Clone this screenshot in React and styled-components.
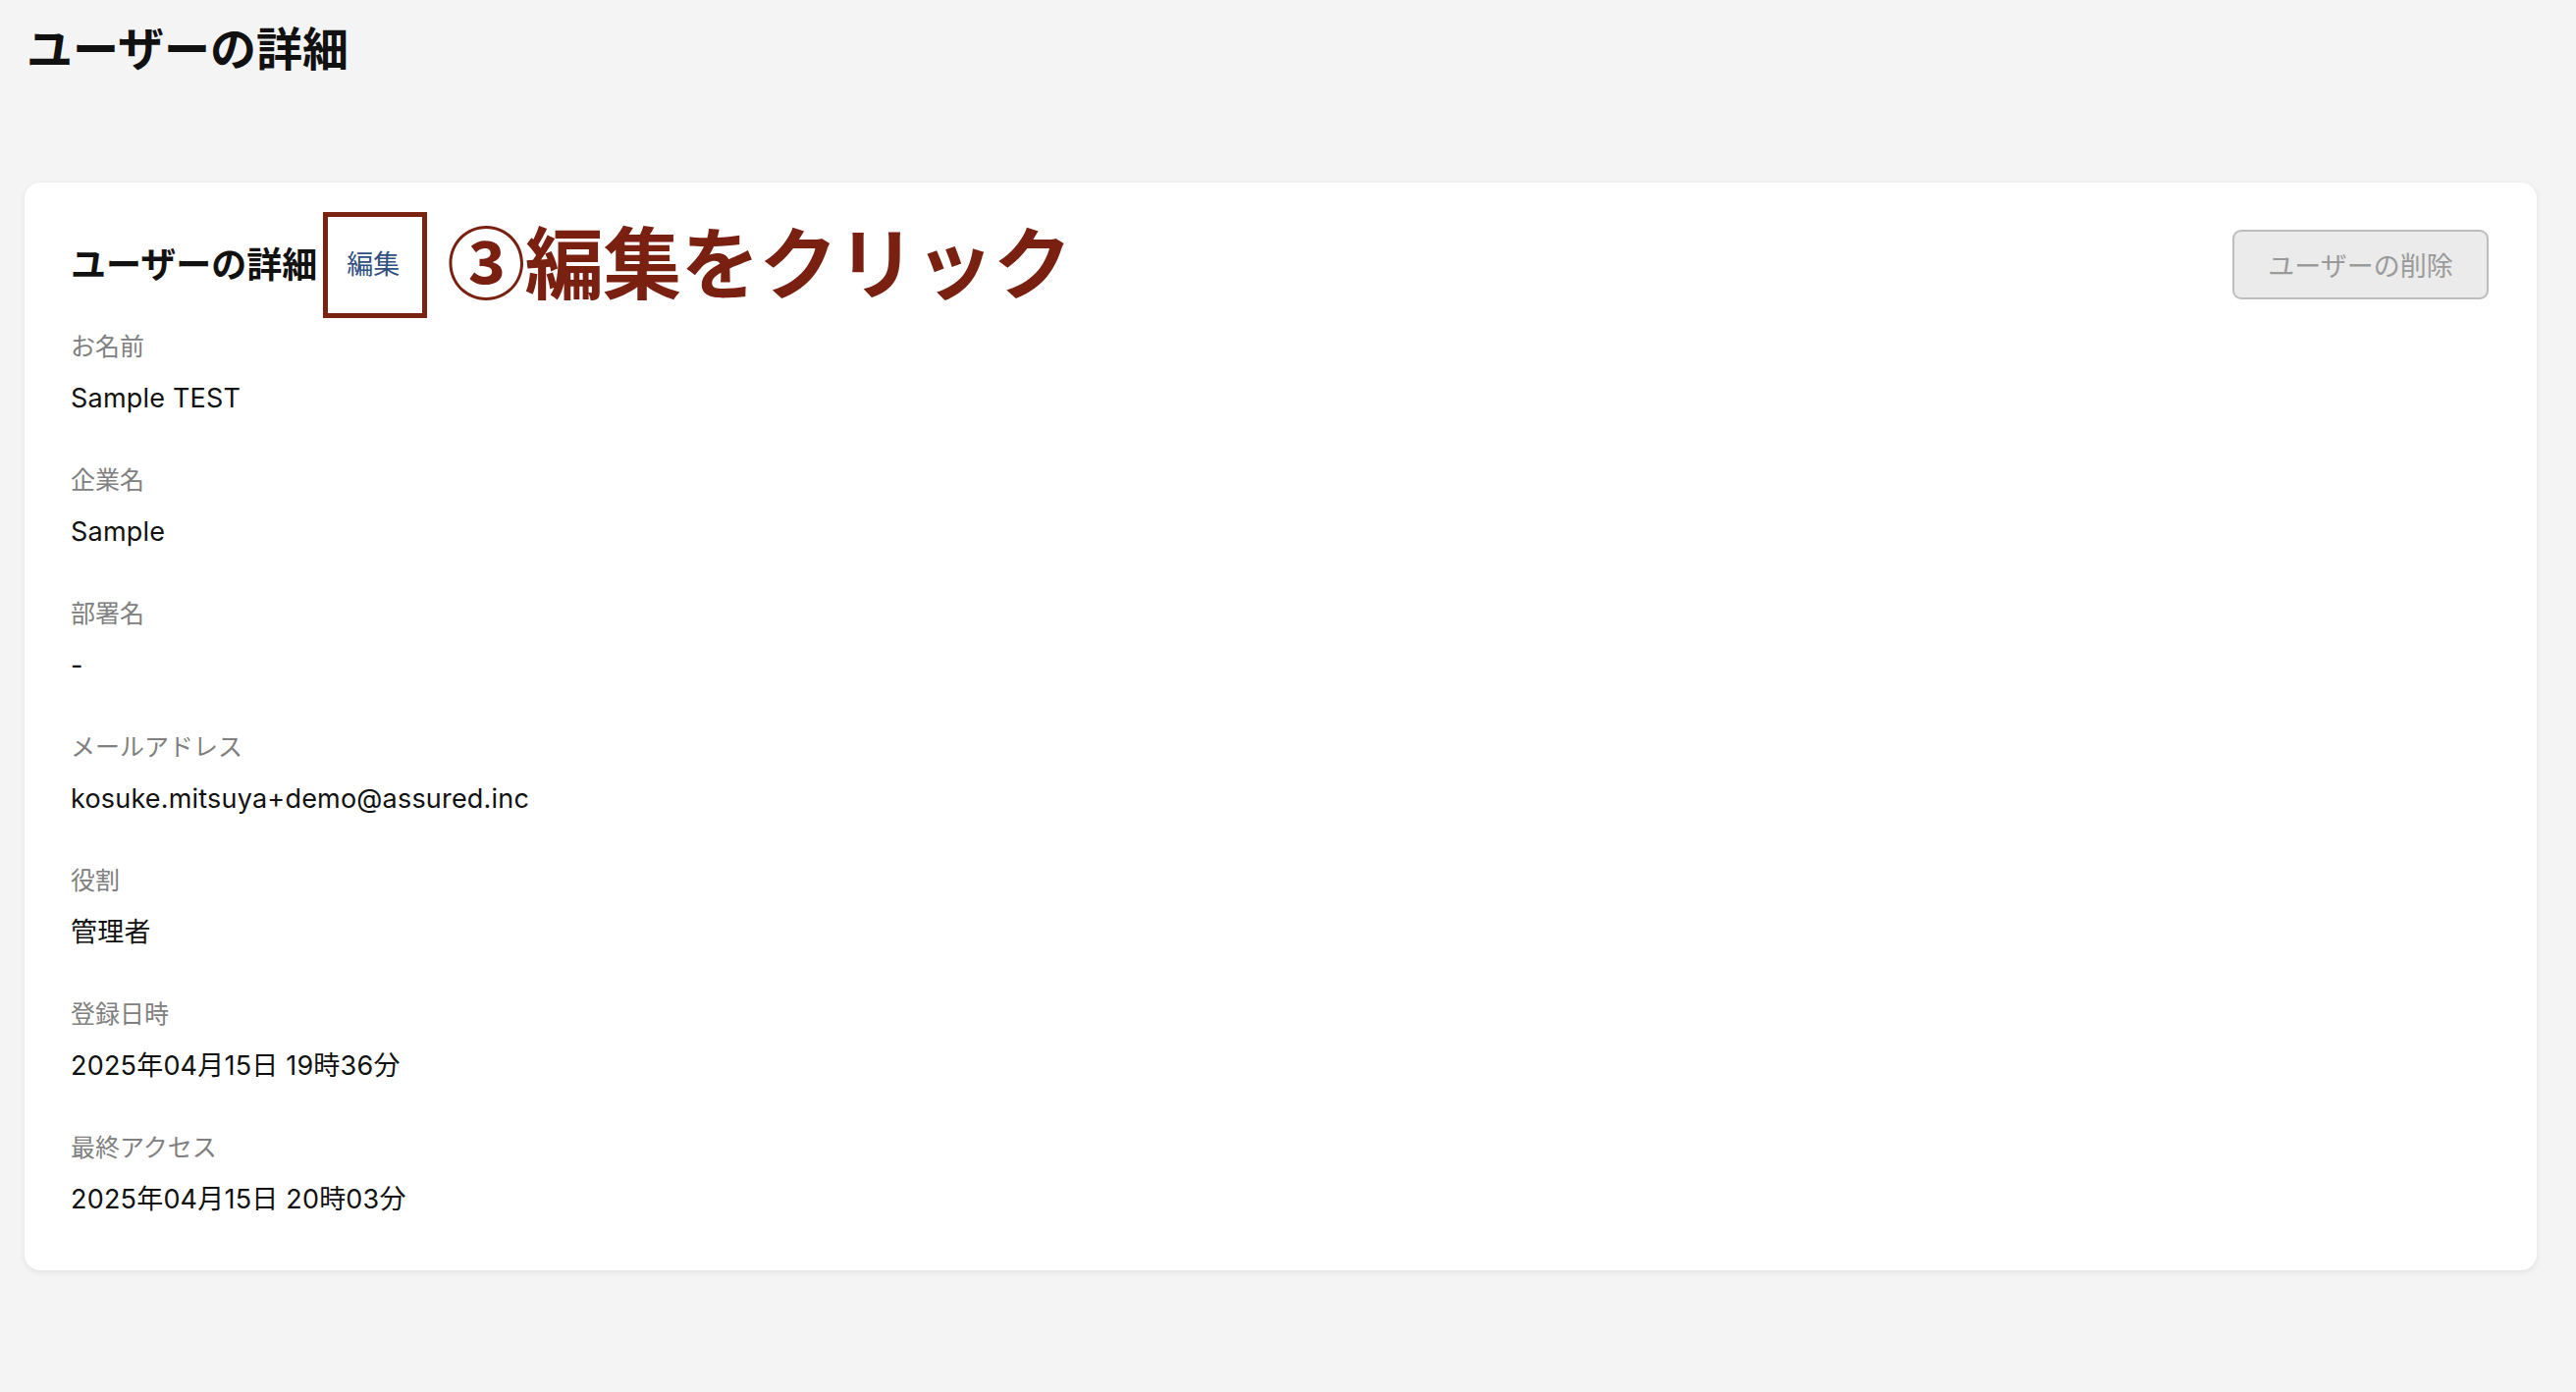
import styled, { createGlobalStyle } from "styled-components";

const GlobalStyle = createGlobalStyle`
  html, body {
    margin: 0;
    padding: 0;
    background: #f4f4f4;
  }
  body {
    font-family: Inter, "Noto Sans CJK JP", sans-serif;
    color: #111;
  }
`;

const Page = styled.div`
  min-height: 1418px;
  box-sizing: border-box;
  padding: 17px 40px 0 25px;
`;

const PageTitle = styled.h1`
  margin: 0 0 0 2px;
  font-size: 47px;
  line-height: 66px;
  font-weight: 700;
`;

const Card = styled.section`
  margin-top: 103px;
  background: #fff;
  border-radius: 16px;
  box-shadow: 0 2px 6px rgba(0, 0, 0, 0.08);
  padding: 48px 49px 52px 47px;
`;

const Header = styled.div`
  display: flex;
  align-items: center;
  height: 71px;
`;

const CardTitle = styled.h2`
  margin: 0;
  font-size: 36px;
  font-weight: 700;
  line-height: 40px;
`;

const EditLink = styled.a`
  position: relative;
  margin-left: 30px;
  font-size: 27px;
  line-height: 40px;
  color: #2f4f80;
  text-decoration: none;
  cursor: pointer;
`;

// red frame drawn around the edit link
const Highlight = styled.span`
  position: absolute;
  left: -24px;
  right: -28px;
  top: -34px;
  bottom: -34px;
  border: 5px solid #7b2311;
  box-sizing: border-box;
  pointer-events: none;
`;

const Callout = styled.span`
  position: absolute;
  left: calc(100% + 48px);
  top: calc(50% - 5px);
  transform: translateY(-52%);
  white-space: nowrap;
  font-family: "Noto Sans CJK JP", sans-serif;
  font-size: 80px;
  font-weight: 700;
  line-height: 1;
  letter-spacing: -0.5px;
  color: #7a2010;
  text-shadow: 0 0 2px #fff;
`;

const DeleteButton = styled.button`
  margin-left: auto;
  width: 261px;
  height: 71px;
  border: 2px solid #bdbdbd;
  border-radius: 9px;
  background: #ebebeb;
  color: #9a9a9a;
  font-family: inherit;
  font-size: 27px;
  cursor: not-allowed;
`;

const Fields = styled.dl`
  margin: 29px 0 0;
  display: flex;
  flex-direction: column;
  gap: 44px;
`;

const Field = styled.div`
  display: flex;
  flex-direction: column;
`;

const Label = styled.dt`
  font-size: 25px;
  line-height: 38px;
  color: #808080;
  margin-bottom: 14px;
`;

const Value = styled.dd`
  margin: 0;
  font-size: 27px;
  line-height: 40px;
  color: #111;
  letter-spacing: 0.2px;
`;

const fields = [
  ["お名前", "Sample TEST"],
  ["企業名", "Sample"],
  ["部署名", "-"],
  ["メールアドレス", "kosuke.mitsuya+demo@assured.inc"],
  ["役割", "管理者"],
  ["登録日時", "2025年04月15日 19時36分"],
  ["最終アクセス", "2025年04月15日 20時03分"],
];

export default function App() {
  return (
    <>
      <GlobalStyle />
      <Page>
        <PageTitle>ユーザーの詳細</PageTitle>
        <Card>
          <Header>
            <CardTitle>ユーザーの詳細</CardTitle>
            <EditLink>
              編集
              <Highlight />
              <Callout>③編集をクリック</Callout>
            </EditLink>
            <DeleteButton disabled>ユーザーの削除</DeleteButton>
          </Header>
          <Fields>
            {fields.map(([label, value]) => (
              <Field key={label}>
                <Label>{label}</Label>
                <Value>{value}</Value>
              </Field>
            ))}
          </Fields>
        </Card>
      </Page>
    </>
  );
}
